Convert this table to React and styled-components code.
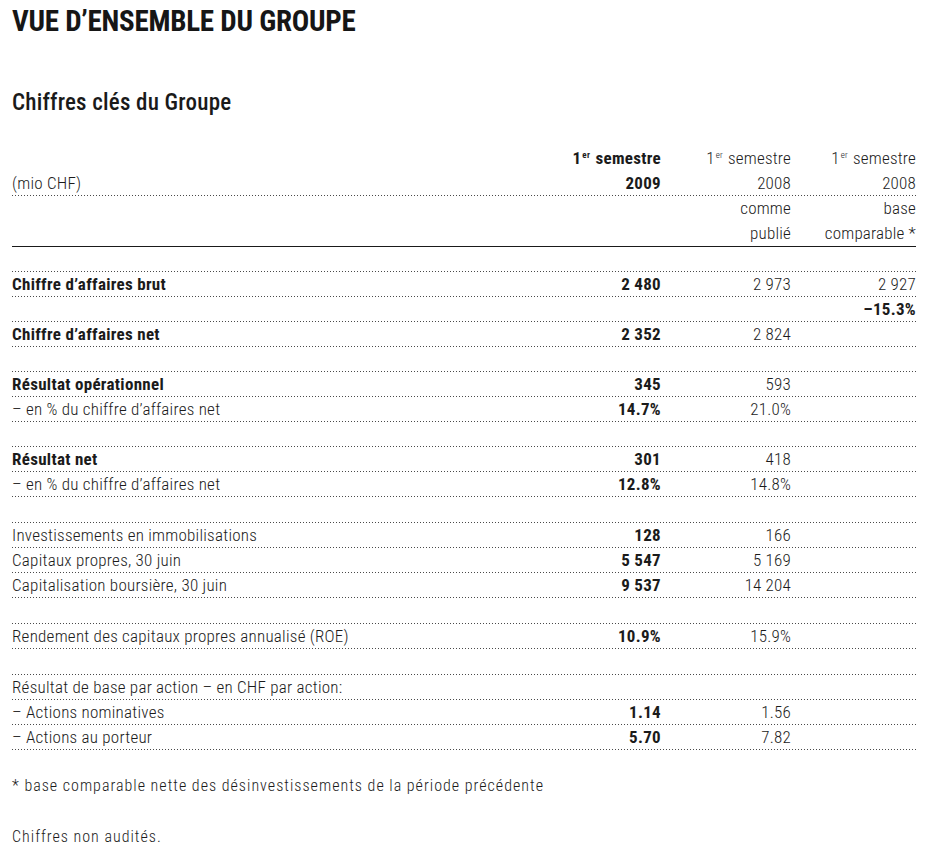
import React from "react";
import styled, { createGlobalStyle } from "styled-components";

const GlobalStyle = createGlobalStyle`
  html, body { margin: 0; padding: 0; background: #ffffff; }
  body {
    font-family: "Roboto Condensed", "Liberation Sans Narrow", "Liberation Sans", sans-serif;
    color: #1b1b1b;
  }
`;

const Page = styled.div`
  width: 904px;
  padding: 3px 11px 0 12px;
`;

const Title = styled.h1`
  margin: 0;
  font-size: 29px;
  line-height: 36px;
  font-weight: 700;
  letter-spacing: -0.25px;
  color: #161616;
`;

const Subtitle = styled.h2`
  margin: 50px 0 0;
  font-size: 23px;
  line-height: 28px;
  font-weight: 500;
  letter-spacing: 0.2px;
  color: #1a1a1a;
`;

const Table = styled.div`
  margin-top: 29px;
  font-size: 17px;
`;

const dots = `
  background-image: linear-gradient(to right, #4a4a4a 1px, transparent 1px);
  background-size: 3px 1px;
  background-repeat: repeat-x;
`;

const Head = styled.div`
  border-bottom: 1px solid #1a1a1a;
`;

const Group = styled.div`
  margin-top: ${(p) => p.$gap}px;
  padding-top: 1px;
  ${dots}
  background-position: left top;
`;

const Row = styled.div`
  display: grid;
  grid-template-columns: 1fr 120px 130px 125px;
  line-height: 24px;
  padding-bottom: 1px;
  ${(p) => (p.$line ? `${dots} background-position: left bottom;` : "")}
`;

const Label = styled.div`
  white-space: nowrap;
  font-weight: ${(p) => (p.$bold ? 700 : 300)};
  letter-spacing: ${(p) => (p.$bold ? "0.3px" : "0.25px")};
`;

const Cell = styled.div`
  text-align: right;
  white-space: nowrap;
  font-weight: ${(p) => (p.$bold ? 700 : 300)};
  letter-spacing: ${(p) => (p.$bold ? "0.3px" : "0.2px")};
`;

const Sup = styled.sup`
  font-size: 9px;
  line-height: 0;
  vertical-align: 6px;
  margin-left: 1px;
  margin-right: 1px;
`;

const Notes = styled.div`
  margin-top: 24px;
`;

const Note = styled.p`
  margin: 0 0 27px;
  font-size: 16px;
  line-height: 24px;
  font-weight: 300;
  letter-spacing: 1px;
  color: #1b1b1b;
`;

const Sem = ({ bold }) => (
  <Cell $bold={bold}>
    1<Sup>er</Sup> semestre
  </Cell>
);

const groups = [
  {
    gap: 24,
    rows: [
      ["Chiffre d’affaires brut", true, "2 480", "2 973", "2 927"],
      ["", false, "", "", "–15.3%", true],
      ["Chiffre d’affaires net", true, "2 352", "2 824", ""],
    ],
  },
  {
    gap: 24,
    rows: [
      ["Résultat opérationnel", true, "345", "593", ""],
      ["– en % du chiffre d’affaires net", false, "14.7%", "21.0%", ""],
    ],
  },
  {
    gap: 24,
    rows: [
      ["Résultat net", true, "301", "418", ""],
      ["– en % du chiffre d’affaires net", false, "12.8%", "14.8%", ""],
    ],
  },
  {
    gap: 25,
    rows: [
      ["Investissements en immobilisations", false, "128", "166", ""],
      ["Capitaux propres, 30 juin", false, "5 547", "5 169", ""],
      ["Capitalisation boursière, 30 juin", false, "9 537", "14 204", ""],
    ],
  },
  {
    gap: 25,
    rows: [["Rendement des capitaux propres annualisé (ROE)", false, "10.9%", "15.9%", ""]],
  },
  {
    gap: 25,
    rows: [
      ["Résultat de base par action – en CHF par action:", false, "", "", ""],
      ["– Actions nominatives", false, "1.14", "1.56", ""],
      ["– Actions au porteur", false, "5.70", "7.82", ""],
    ],
  },
];

export default function App() {
  return (
    <Page>
      <GlobalStyle />
      <Title>VUE D’ENSEMBLE DU GROUPE</Title>
      <Subtitle>Chiffres clés du Groupe</Subtitle>
      <Table>
        <Head>
          <Row>
            <Label />
            <Sem bold />
            <Sem />
            <Sem />
          </Row>
          <Row $line>
            <Label>(mio CHF)</Label>
            <Cell $bold>2009</Cell>
            <Cell>2008</Cell>
            <Cell>2008</Cell>
          </Row>
          <Row>
            <Label />
            <Cell />
            <Cell>comme</Cell>
            <Cell>base</Cell>
          </Row>
          <Row>
            <Label />
            <Cell />
            <Cell>publié</Cell>
            <Cell>comparable *</Cell>
          </Row>
        </Head>
        {groups.map((g, gi) => (
          <Group key={gi} $gap={g.gap}>
            {g.rows.map((r, ri) => (
              <Row $line key={ri}>
                <Label $bold={r[1]}>{r[0]}</Label>
                <Cell $bold>{r[2]}</Cell>
                <Cell>{r[3]}</Cell>
                <Cell $bold={r[5]}>{r[4]}</Cell>
              </Row>
            ))}
          </Group>
        ))}
      </Table>
      <Notes>
        <Note>* base comparable nette des désinvestissements de la période précédente</Note>
        <Note>Chiffres non audités.</Note>
      </Notes>
    </Page>
  );
}
